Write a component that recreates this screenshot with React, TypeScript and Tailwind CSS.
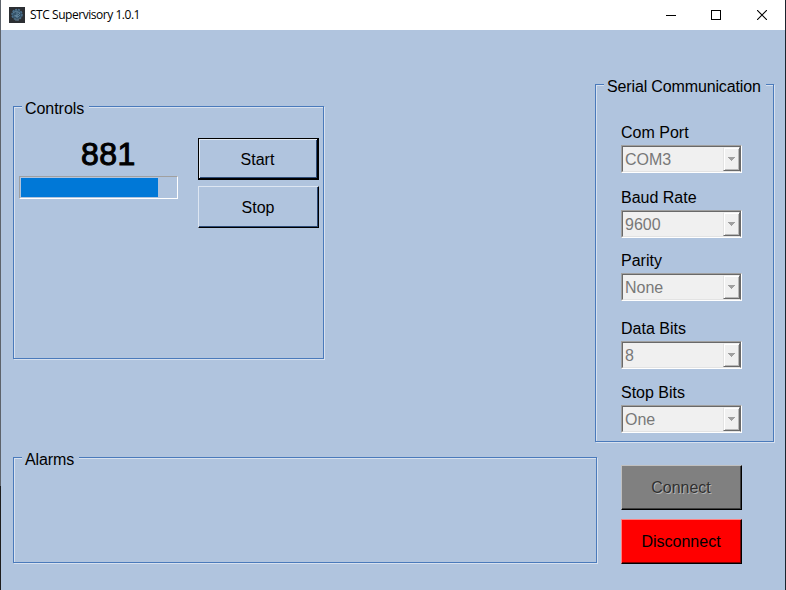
import type { ReactNode } from "react";

function GroupBox({ title, legendClass, className, children }: { title: string; legendClass: string; className: string; children?: ReactNode }) {
  return (
    <section className={`shrink-0 border border-[#4a7abb] shadow-[1px_1px_0_#d7e1ef,inset_1px_1px_0_#d7e1ef] ${className}`}>
      <h2 className={`-mt-[9px] ml-2 h-[19px] bg-[#b0c4de] pl-[3px] text-base leading-[22px] whitespace-nowrap ${legendClass}`}>{title}</h2>
      {children}
    </section>
  );
}

function Field({ label, value, className = "" }: { label: string; value: string; className?: string }) {
  return (
    <div className={`flex w-[121px] flex-col ${className}`}>
      <label className="mb-1 h-[18px] text-base leading-[20px] whitespace-nowrap">{label}</label>
      <div className="h-7 border border-t-[#a0a0a0] border-r-white border-b-white border-l-[#a0a0a0]">
        <div className="flex h-[26px] border border-t-[#696969] border-r-[#696969] border-b-[#e3e3e3] border-l-[#696969] bg-[#f0f0f0]">
          <span className="flex-1 pl-[2px] text-base leading-[25px] text-[#787878]">{value}</span>
          <span className="flex h-6 w-[17px] items-center justify-center border border-t-[#f0f0f0] border-r-[#696969] border-b-[#696969] border-l-[#e3e3e3] shadow-[inset_1px_1px_0_#fff,inset_-1px_-1px_0_#b8b8b8]">
            <svg width="7" height="4" viewBox="0 0 7 4" shapeRendering="crispEdges">
              <path d="M0 0h7v1H6v1H5v1H4v1H3V3H2V2H1V1H0z" fill="#a0a0a0" />
            </svg>
          </span>
        </div>
      </div>
    </div>
  );
}

function TitleBar() {
  return (
    <header className="flex h-[30px] items-center bg-white">
      <svg className="ml-2" width="16" height="16" viewBox="0 0 16 16">
        <rect width="16" height="16" fill="#2c2f33" />
        <circle cx="8" cy="7.5" r="5" fill="#35536a" stroke="#4a6f8c" strokeWidth="1.5" strokeDasharray="2 1" />
        <path d="M4 6l3-2 4 2-2 2-4 1M6 9l3 1 2-2M8 5v6M6 13h4" fill="none" stroke="#6a8da5" strokeWidth=".8" />
        <path d="M5 11l3 2 3-2" fill="none" stroke="#526574" />
      </svg>
      <h1 className="ml-[5px] flex-1 font-['Open_Sans',sans-serif] text-[12px] leading-[30px] tracking-[-0.46px] text-black">STC Supervisory 1.0.1</h1>
      <svg width="10" height="11" viewBox="0 0 10 11" shapeRendering="crispEdges">
        <path d="M0 5h10v1H0z" />
      </svg>
      <svg className="ml-[35px]" width="10" height="10" viewBox="0 0 10 10" shapeRendering="crispEdges">
        <path d="M.5.5h9v9h-9z" fill="none" stroke="#000" />
      </svg>
      <svg className="mr-[18px] ml-9" width="10" height="10" viewBox="0 0 10 10">
        <path d="M0 0l10 10M10 0L0 10" stroke="#000" strokeWidth="1.1" />
      </svg>
    </header>
  );
}

export default function App() {
  return (
    <div className="flex h-[590px] w-[786px] overflow-hidden bg-[#b0c4de] font-['Liberation_Sans',Arial,sans-serif] text-black">
      <div className="flex w-px shrink-0 flex-col">
        <div className="h-[486px] bg-[#5d636b]" />
        <div className="flex-1 bg-[#1d1d1d]" />
      </div>
      <div className="w-[784px] shrink-0">
        <TitleBar />
        <main>
          <div className="flex h-[427px] pl-3">
            <GroupBox title="Controls" legendClass="w-[67px] tracking-[-0.05px]" className="mt-[76px] h-[253px] w-[311px]">
              <div className="flex pl-[5px]">
                <div className="w-[159px] pt-[17px]">
                  <output className="block h-9 pl-[62px] text-[32px] leading-[40px] tracking-[0.4px] [-webkit-text-stroke:1px_#000]">881</output>
                  <div className="mt-[6px] h-[23px] border border-t-[#a0a0a0] border-r-white border-b-white border-l-[#a0a0a0] p-px">
                    <div className="h-[19px] w-[137px] bg-[#0078d7]" />
                  </div>
                </div>
                <div className="ml-5 flex flex-col gap-[6px] pt-[21px]">
                  <button className="h-[42px] w-[121px] border border-r-2 border-b-2 border-black pt-[3px] pr-px text-base shadow-[inset_1px_1px_0_#e4ebf5,inset_-1px_-1px_0_#2d4b77]">Start</button>
                  <button className="h-[42px] w-[121px] border border-t-[#dde6f2] border-r-black border-b-black border-l-[#dde6f2] pt-[2px] pr-px text-base shadow-[inset_-1px_-1px_0_#2d4b77]">Stop</button>
                </div>
              </div>
            </GroupBox>
            <GroupBox title="Serial Communication" legendClass="w-[162px] tracking-[-0.14px]" className="mt-[54px] ml-[271px] h-[358px] w-[179px]">
              <div className="flex flex-col pt-7 pl-[25px]">
                <Field label="Com Port" value="COM3" />
                <Field label="Baud Rate" value="9600" className="mt-[15px]" />
                <Field label="Parity" value="None" className="mt-[13px]" />
                <Field label="Data Bits" value="8" className="mt-[18px]" />
                <Field label="Stop Bits" value="One" className="mt-[14px]" />
              </div>
            </GroupBox>
          </div>
          <div className="flex pl-3">
            <GroupBox title="Alarms" legendClass="w-[57px] tracking-[-0.1px]" className="h-[106px] w-[584px]" />
            <div className="ml-6 flex flex-col gap-[9px] pt-2">
              <button disabled className="h-[45px] w-[121px] border border-t-[#c0c0c0] border-r-black border-b-black border-l-[#c0c0c0] bg-[#808080] pr-px text-base text-[#303030] shadow-[inset_-1px_-1px_0_#404040] [text-shadow:1px_1px_0_#b4b4b4]">Connect</button>
              <button className="h-[45px] w-[121px] border border-t-[#ff8080] border-r-black border-b-black border-l-[#ff8080] bg-[#ff0000] pr-px text-base shadow-[inset_-1px_-1px_0_#800000]">Disconnect</button>
            </div>
          </div>
        </main>
      </div>
      <div className="w-px shrink-0 bg-[#1b242e]" />
    </div>
  );
}
